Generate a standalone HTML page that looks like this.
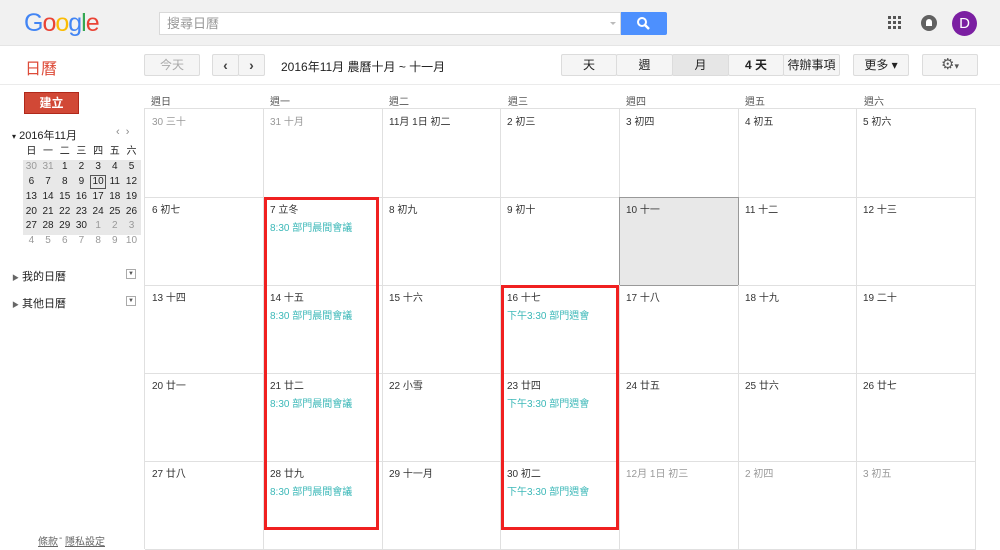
<!DOCTYPE html>
<html><head><meta charset="utf-8"><style>
*{margin:0;padding:0;box-sizing:border-box}
body{width:1000px;height:549px;overflow:hidden;background:#fff;font-family:"Liberation Sans","Noto Sans CJK TC",sans-serif;font-size:11px;color:#222;position:relative}
.a{position:absolute}
.top{left:0;top:0;width:1000px;height:46px;background:#f1f1f1;border-bottom:1px solid #e5e5e5}
.btn{position:absolute;height:22px;border:1px solid #dcdcdc;background:#f5f5f5;border-radius:2px;font-size:12px;color:#444;text-align:center;line-height:20px}
.cell{position:absolute;border-right:1px solid #e0e0e0;border-bottom:1px solid #e0e0e0;padding:4px 7px;font-size:10px;color:#333}
.g{color:#999}
.ev{color:#3cb8b8;margin-top:3px;font-size:10px}
.hd{position:absolute;top:93px;font-size:10px;color:#555}
.mini td{width:16.7px;text-align:center;font-size:10px;height:14.8px;line-height:14px;color:#222;padding:0}
.mini .g{color:#999}
</style></head><body>
<div class="a top"></div>
<div class="a" style="left:24px;top:9px;font-size:25px;letter-spacing:-1px;font-family:'Liberation Sans',sans-serif"><span style="color:#4285f4">G</span><span style="color:#ea4335">o</span><span style="color:#fbbc05">o</span><span style="color:#4285f4">g</span><span style="color:#34a853">l</span><span style="color:#ea4335">e</span></div>
<div class="a" style="left:159px;top:12px;width:462px;height:23px;background:#fff;border:1px solid #d9d9d9;padding:2px 7px;font-size:13px;line-height:17px;color:#999">搜尋日曆<span style="position:absolute;right:4px;top:9px;border:3px solid transparent;border-top-color:#bbb"></span></div>
<div class="a" style="left:621px;top:12px;width:46px;height:23px;background:#4d90fe;border-radius:0 2px 2px 0"><svg width="46" height="23"><circle cx="21" cy="10" r="4" stroke="#fff" stroke-width="2" fill="none"/><path d="M24 13l4 4" stroke="#fff" stroke-width="2.5"/></svg></div>
<svg class="a" style="left:888px;top:16px" width="14" height="14"><g fill="#555"><rect x="0" y="0" width="3" height="3"/><rect x="5" y="0" width="3" height="3"/><rect x="10" y="0" width="3" height="3"/><rect x="0" y="5" width="3" height="3"/><rect x="5" y="5" width="3" height="3"/><rect x="10" y="5" width="3" height="3"/><rect x="0" y="10" width="3" height="3"/><rect x="5" y="10" width="3" height="3"/><rect x="10" y="10" width="3" height="3"/></g></svg>
<div class="a" style="left:921px;top:15px;width:16px;height:16px;border-radius:50%;background:#616161"><div class="a" style="left:5px;top:4px;width:6px;height:7px;background:#fff;border-radius:3px 3px 0 0"></div></div>
<div class="a" style="left:952px;top:11px;width:25px;height:25px;border-radius:50%;background:#7b1fa2;color:#fff;font-size:15px;text-align:center;line-height:25px">D</div>
<div class="a" style="left:25px;top:55px;font-size:16px;color:#dd4b39">日曆</div>
<div class="btn" style="left:144px;top:54px;width:56px;color:#aaa">今天</div>
<div class="btn" style="left:212px;top:54px;width:27px;font-size:14px;font-weight:bold">‹</div>
<div class="btn" style="left:238px;top:54px;width:27px;font-size:14px;font-weight:bold">›</div>
<div class="a" style="left:281px;top:58px;font-size:12px;color:#222">2016年11月 農曆十月 ~ 十一月</div>
<div class="btn" style="left:561px;top:54px;width:56px;color:#222">天</div>
<div class="btn" style="left:616px;top:54px;width:57px;color:#222">週</div>
<div class="btn" style="left:672px;top:54px;width:57px;color:#222;background:#e6e6e6">月</div>
<div class="btn" style="left:728px;top:54px;width:56px;color:#222;font-weight:bold">4 天</div>
<div class="btn" style="left:783px;top:54px;width:57px;color:#222">待辦事項</div>
<div class="btn" style="left:853px;top:54px;width:56px;color:#222">更多 ▾</div>
<div class="btn" style="left:922px;top:54px;width:56px;color:#555;font-size:15px">⚙<span style="font-size:9px">▾</span></div>
<div class="a" style="left:0;top:84px;width:1000px;border-top:1px solid #ebebeb"></div>
<div class="a" style="left:24px;top:92px;width:55px;height:22px;background:#d14836;border:1px solid #b0281a;color:#fff;font-weight:bold;font-size:12px;text-align:center;line-height:20px">建立</div>
<div class="a" style="left:12px;top:127px;font-size:11px;color:#222"><span style="font-size:8px">▾</span> 2016年11月</div>
<div class="a" style="left:116px;top:126px;font-size:11px;color:#888">‹ &nbsp;›</div>
<div class="a" style="left:23px;top:160px;width:118px;height:75px;background:#e8e8e8"></div>
<table class="a mini" style="left:23px;top:145px;border-collapse:collapse">
<tr><td>日</td><td>一</td><td>二</td><td>三</td><td>四</td><td>五</td><td>六</td></tr>
<tr><td class="g">30</td><td class="g">31</td><td>1</td><td>2</td><td>3</td><td>4</td><td>5</td></tr>
<tr><td>6</td><td>7</td><td>8</td><td>9</td><td style="outline:1px solid #555;outline-offset:-1px">10</td><td>11</td><td>12</td></tr>
<tr><td>13</td><td>14</td><td>15</td><td>16</td><td>17</td><td>18</td><td>19</td></tr>
<tr><td>20</td><td>21</td><td>22</td><td>23</td><td>24</td><td>25</td><td>26</td></tr>
<tr><td>27</td><td>28</td><td>29</td><td>30</td><td class="g">1</td><td class="g">2</td><td class="g">3</td></tr>
<tr><td class="g">4</td><td class="g">5</td><td class="g">6</td><td class="g">7</td><td class="g">8</td><td class="g">9</td><td class="g">10</td></tr>
</table>
<div class="a" style="left:12px;top:268px;font-size:11px"><span style="font-size:7px;color:#666">▶</span> 我的日曆</div>
<div class="a" style="left:12px;top:295px;font-size:11px"><span style="font-size:7px;color:#666">▶</span> 其他日曆</div>
<div class="a" style="left:126px;top:269px;width:10px;height:10px;border:1px solid #aaa;font-size:6px;text-align:center;line-height:8px;color:#555">▼</div>
<div class="a" style="left:126px;top:296px;width:10px;height:10px;border:1px solid #aaa;font-size:6px;text-align:center;line-height:8px;color:#555">▼</div>
<div class="a" style="left:38px;top:533px;font-size:10px;color:#666;text-decoration:underline">條款</div><div class="a" style="left:59px;top:533px;font-size:10px;color:#666">-</div><div class="a" style="left:65px;top:533px;font-size:10px;color:#666;text-decoration:underline">隱私設定</div>
<div class="hd" style="left:151px">週日</div><div class="hd" style="left:270px">週一</div><div class="hd" style="left:389px">週二</div><div class="hd" style="left:508px">週三</div><div class="hd" style="left:626px">週四</div><div class="hd" style="left:745px">週五</div><div class="hd" style="left:864px">週六</div>
<div class="a" style="left:144px;top:108px;width:832px;height:441px;border-left:1px solid #e0e0e0;border-top:1px solid #e0e0e0"></div>
<div id="g"></div>
<script>
var d=[["30 三十","31 十月","11月 1日 初二","2 初三","3 初四","4 初五","5 初六"],
["6 初七","7 立冬","8 初九","9 初十","10 十一","11 十二","12 十三"],
["13 十四","14 十五","15 十六","16 十七","17 十八","18 十九","19 二十"],
["20 廿一","21 廿二","22 小雪","23 廿四","24 廿五","25 廿六","26 廿七"],
["27 廿八","28 廿九","29 十一月","30 初二","12月 1日 初三","2 初四","3 初五"]];
var xs=[145,263,382,500,619,738,856,975],ys=[109,197,285,373,461,549],h='';
for(var r=0;r<5;r++)for(var c=0;c<7;c++){var g=(r==0&&c<2)||(r==4&&c>3);var st='left:'+xs[c]+'px;top:'+ys[r]+'px;width:'+(xs[c+1]-xs[c]+1)+'px;height:'+(ys[r+1]-ys[r]+1)+'px;';
if(r==1&&c==4)st+='background:#e8e8e8;border:1px solid #999;padding:3px 6px;';
var ev='';if(c==1&&r>0)ev='<div class="ev">8:30 部門晨間會議</div>';if(c==3&&r>1)ev='<div class="ev">下午3:30 部門週會</div>';
h+='<div class="cell'+(g?' g':'')+'" style="'+st+'">'+d[r][c]+ev+'</div>';}
document.getElementById('g').innerHTML=h;
</script>
<div class="a" style="left:264px;top:197px;width:115px;height:333px;border:3px solid #f02020"></div>
<div class="a" style="left:501px;top:285px;width:118px;height:245px;border:3px solid #f02020"></div>
</body></html>
